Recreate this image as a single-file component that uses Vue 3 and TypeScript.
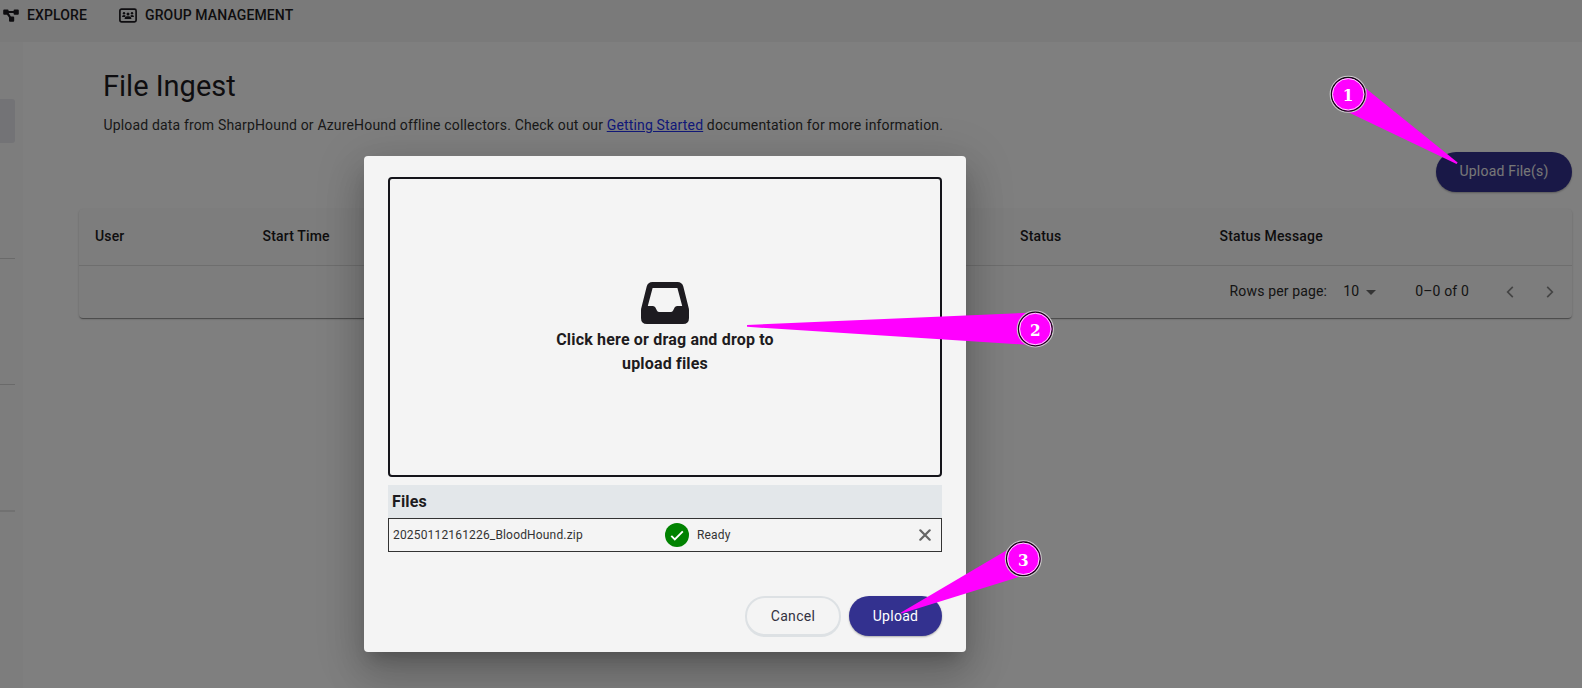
<script setup lang="ts">
interface Callout { n: number; x: number; y: number; wedge: string }

const columns: string[] = ['User', 'Start Time', 'Status', 'Status Message']
const callouts: Callout[] = [
  { n: 1, x: 1348.2, y: 94.3, wedge: '1356.6,81 1457.6,162.4 1456.6,164 1339.4,108' },
  { n: 2, x: 1035.3, y: 329, wedge: '1035,312.5 747,325 747,326.8 1035,345.3' },
  { n: 3, x: 1023.3, y: 558.8, wedge: '1016.5,544.4 901,612.6 901.4,613.6 1029.5,573.6' },
]
</script>

<template>
  <div class="page">
    <header class="topbar">
      <a class="nav explore">
        <svg width="16" height="13" viewBox="0 0 16 13"><path d="M1.2.5h3.4q1 0 1 1v.6h5v-.6q0-1 1-1h3.2q1 0 1 1v3.2q0 1-1 1h-3.2q-1 0-1-1v-.8H5.7L7.9 7.5h2.3q1 0 1 1v3.2q0 1-1 1H7q-1 0-1-1V8.5L4 5.7H1.2q-1 0-1-1V1.5q0-1 1-1z" fill="currentColor"/></svg>
        <span>EXPLORE</span>
      </a>
      <a class="nav group">
        <svg width="18" height="15" viewBox="0 0 18 15"><rect x=".9" y="1.1" width="16.2" height="12.8" rx="1.6" fill="none" stroke="currentColor" stroke-width="1.7"/><g fill="currentColor"><circle cx="5" cy="5.2" r="1.2"/><circle cx="13" cy="5.2" r="1.2"/><circle cx="9" cy="6" r="1.5"/><path d="M3 9q0-2 2-2 1 0 1.6.6L6 9zM15 9q0-2-2-2-1 0-1.6.6L12 9zM5.6 11q0-2.7 2.4-2.7h2q2.4 0 2.4 2.7z"/></g></svg>
        <span>GROUP MANAGEMENT</span>
      </a>
    </header>
    <div class="body">
      <aside class="side">
        <div class="selected"></div>
        <hr class="d1" /><hr class="d2" /><hr class="d3" />
      </aside>
      <main class="main">
        <h1>File Ingest</h1>
        <p class="intro">Upload data from SharpHound or AzureHound offline collectors. Check out our <a class="link">Getting Started</a> documentation for more information.</p>
        <div class="actions"><button class="btn primary">Upload File(s)</button></div>
        <section class="card">
          <div class="thead"><span v-for="c in columns" :key="c">{{ c }}</span></div>
          <div class="pager">
            <span>Rows per page:</span>
            <span class="ten">10</span>
            <svg class="caret" width="10" height="5" viewBox="0 0 10 5"><path d="M0 0h10L5 5z" fill="#6b6b6b"/></svg>
            <span class="range">0–0 of 0</span>
            <svg class="chev" width="8" height="12" viewBox="0 0 8 12"><path d="M6.8.9 1.7 6l5.1 5.1" /></svg>
            <svg class="chev next" width="8" height="12" viewBox="0 0 8 12"><path d="M1.2.9 6.3 6l-5.1 5.1" /></svg>
          </div>
        </section>
      </main>
    </div>

    <div class="backdrop">
      <div class="dialog">
        <div class="drop">
          <svg width="48" height="42" viewBox="0 0 48 42"><path fill="currentColor" fill-rule="evenodd" d="M11.5 0h25q4.6 0 5.8 4.5l5.2 20.8q.5 1.5.5 3V36q0 6-6 6H6q-6 0-6-6v-7.700q0-1.500.5-3L5.700 4.500Q6.900 0 11.500 0zM11.600 6 6.800 24h5.100q1.700 0 2.500 1.500l1.500 3q.8 1.500 2.500 1.500h11.200q1.700 0 2.500-1.500l1.500-3q.8-1.500 2.500-1.500h5.100L36.400 6z"/></svg>
          <div class="droptext">Click here or drag and drop to upload files</div>
        </div>
        <div class="fileshead">Files</div>
        <div class="filerow">
          <span class="fname">20250112161226_BloodHound.zip</span>
          <svg width="24" height="24" viewBox="0 0 24 24"><circle cx="12" cy="12" r="12" fill="#008200"/><path d="m6.300 12.800 3.500 3.500 8-8" fill="none" stroke="#fff" stroke-width="1.900"/></svg>
          <span class="ready">Ready</span>
          <svg class="x" width="12" height="12" viewBox="0 0 12 12"><path d="m1.300 1.300 9.400 9.400m0-9.400-9.400 9.400" stroke="#666" stroke-width="2.200" stroke-linecap="round"/></svg>
        </div>
        <div class="footer">
          <button class="btn cancel">Cancel</button>
          <button class="btn primary">Upload</button>
        </div>
      </div>
    </div>

    <svg class="callouts" width="1582" height="688" viewBox="0 0 1582 688">
      <g v-for="c in callouts" :key="c.n">
        <polygon :points="c.wedge" fill="#f0f" />
        <circle :cx="c.x" :cy="c.y" r="17.900" fill="#f0f" stroke="#ccc" stroke-width="1.300" />
        <circle :cx="c.x" :cy="c.y" r="16.800" fill="#f0f" stroke="#111" stroke-width="1.300" />
        <circle :cx="c.x" :cy="c.y" r="15.700" fill="#f0f" stroke="#fbdcfb" stroke-width="1" />
        <text :x="c.x" :y="c.y + 7" text-anchor="middle">{{ c.n }}</text>
      </g>
    </svg>
  </div>
</template>

<style>
body { margin: 0; overflow: hidden; }
</style>

<style scoped>
.page { position: relative; width: 1582px; height: 688px; overflow: hidden; background: #fff; color: #1d1b20; font-family: Roboto, sans-serif; font-size: 14px; display: flex; flex-direction: column; }
.page * { box-sizing: border-box; }
svg { display: block; flex: none; }
.topbar { height: 42px; flex: none; background: #f4f4f4; display: flex; align-items: flex-start; padding-left: 3px; }
.nav { display: flex; align-items: center; height: 30px; font-weight: 500; letter-spacing: .13px; }
.nav span { margin-left: 8px; white-space: nowrap; }
.explore { width: 116px; }
.body { flex: 1; display: flex; min-height: 0; }
.side { width: 23px; background: #fafafa; padding-top: 56.500px; flex: none; }
.selected { width: 15px; height: 44.500px; background: #e6e6ec; border-radius: 0 3px 3px 0; }
hr { border: 0; height: 1px; background: #d4d4d4; width: 15px; margin: 0; }
.d1 { margin-top: 115px; }
.d2 { margin-top: 125px; }
.d3 { margin-top: 125px; height: 2px; background: #e2e2e2; }
.main { flex: 1; padding: 24px 10px 0 56px; }
h1 { margin: 0 0 0 24px; font-weight: 400; font-size: 29px; line-height: 40px; }
.intro { margin: 9px 0 0 24.500px; line-height: 20px; letter-spacing: .16px; white-space: nowrap; color: #333; }
.link { color: #2433f2; text-decoration: underline; }
.actions { display: flex; justify-content: flex-end; margin-top: 17px; }
.btn { font: 400 14px Roboto, sans-serif; height: 40px; border: 0; border-radius: 20px; padding: 0; letter-spacing: .3px; }
.primary { background: #33318f; color: #fff; box-shadow: 0 1px 2px rgba(0,0,0,.3); }
.actions .btn { width: 136px; padding-bottom: 2px; letter-spacing: .2px; color: #eee; }
.card { margin-top: 17px; height: 109px; background: #fafafa; border-radius: 4px; box-shadow: 0 2px 1px -1px rgba(0,0,0,.25), 0 1px 1px rgba(0,0,0,.16), 0 1px 3px rgba(0,0,0,.14); }
.thead { height: 57px; border-bottom: 1px solid #dcdcdc; display: grid; grid-template-columns: 167.500px 757.500px 199.500px 1fr; padding-left: 16px; align-items: center; padding-bottom: 3px; font-weight: 500; letter-spacing: .17px; }
.pager { height: 52px; display: flex; align-items: center; justify-content: flex-end; padding-right: 18px; padding-bottom: 3px; letter-spacing: .15px; color: #2a2a2a; }
.ten { margin-left: 16px; }
.caret { margin: 3px 39px 0 7px; }
.chev { margin-left: 37px; margin-top: 2px; fill: none; stroke: #888; stroke-width: 1.700; }
.chev.next { margin-left: 32px; }
.backdrop { position: absolute; inset: 0; background: rgba(0,0,0,.5); padding: 156px 0 0 364px; }
.dialog { width: 602px; height: 496px; background: #f4f4f4; border-radius: 4px; padding: 20.500px 24px 0; box-shadow: 0 11px 15px -7px rgba(0,0,0,.2), 0 24px 38px 3px rgba(0,0,0,.14), 0 9px 46px 8px rgba(0,0,0,.12); }
.drop { height: 300px; border: 2px solid #14141a; border-radius: 4px; display: flex; flex-direction: column; align-items: center; padding-top: 103px; }
.droptext { width: 236px; text-align: center; font-weight: 700; font-size: 16px; line-height: 24px; margin-top: 4px; letter-spacing: .18px; }
.fileshead { margin-top: 8px; height: 33px; background: #e3e7ea; font-weight: 700; font-size: 16px; line-height: 33px; padding-left: 4px; letter-spacing: .15px; }
.filerow { height: 34px; border: 1px solid #333; display: flex; align-items: center; font-size: 12px; padding: 0 10px 0 4px; color: #333; }
.fname { width: 272px; letter-spacing: .17px; }
.ready { margin-left: 8px; flex: 1; letter-spacing: .15px; }
.footer { display: flex; justify-content: flex-end; gap: 8px; margin-top: 44px; }
.footer .primary { width: 93px; }
.cancel { width: 96px; height: 41px; background: #f4f4f4; color: #33313f; border: 2px solid #dde1e4; border-bottom-width: 3px; padding-bottom: 0; }
.callouts { position: absolute; left: 0; top: 0; }
.callouts text { font: 700 17px "DejaVu Serif Condensed", "DejaVu Serif", serif; fill: #fff; }
</style>
